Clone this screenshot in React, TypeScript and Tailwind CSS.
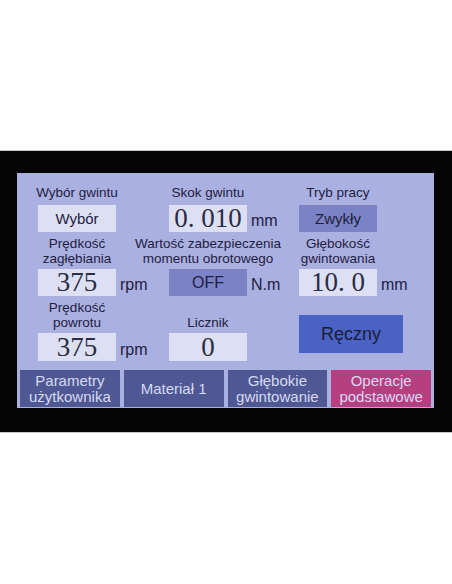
import React from "react";

const sans = { fontFamily: '"Liberation Sans", Arial, sans-serif' };

function Label({ lines }: { lines: string[] }) {
  return (
    <div className="w-[78px] flex flex-col items-center">
      {lines.map((l) => (
        <div key={l} className="whitespace-nowrap text-[13.5px] leading-[15px] text-[#1e2140]">
          {l}
        </div>
      ))}
    </div>
  );
}

function ValueBox({ value, dark, serif, unit, h = "h-[27px]" }: { value: string; dark?: boolean; serif?: boolean; unit?: string; h?: string }) {
  return (
    <div className="flex items-end gap-[4px]">
      <div
        className={`w-[78px] ${h} flex items-center justify-center ${dark ? "bg-[#7b82c6]" : "bg-[#dde0f2]"}`}
      >
        {serif ? (
          <span
            className="text-[27px] leading-none text-[#2a2d45] whitespace-pre"
            style={{ fontFamily: '"Liberation Serif", "Times New Roman", serif' }}
          >
            {value}
          </span>
        ) : (
          <span className={`leading-none text-[#1e2140] ${dark && value === "OFF" ? "text-[16px] font-medium" : "text-[15px]"}`}>
            {value}
          </span>
        )}
      </div>
      {unit && <span className="text-[16px] leading-none pb-[3px] text-[#1e2140]">{unit}</span>}
    </div>
  );
}

const tabs = [
  { lines: ["Parametry", "użytkownika"], bg: "bg-[#4f5893]" },
  { lines: ["Materiał 1"], bg: "bg-[#4f5893]" },
  { lines: ["Głębokie", "gwintowanie"], bg: "bg-[#4f5893]" },
  { lines: ["Operacje", "podstawowe"], bg: "bg-[#b63f80]" },
];

export default function App() {
  return (
    <div className="w-[452px] h-[584px] bg-white" style={sans}>
      <div className="h-[150px]" />
      <div className="h-[283px] bg-[#050505] border-y border-[#c8c8c8] pl-[17px] pt-[22px]">
        <div className="w-[417px] h-[235px] bg-[#aab0e0] flex flex-col">
          {/* Row 1 */}
          <div className="grid grid-cols-[131px_130px_130px] pl-[21px] pt-[12px]">
            <div className="flex flex-col">
              <Label lines={["Wybór gwintu"]} />
              <div className="mt-[5px]">
                <ValueBox value="Wybór" />
              </div>
            </div>
            <div className="flex flex-col">
              <Label lines={["Skok gwintu"]} />
              <div className="mt-[5px]">
                <ValueBox value="0. 010" serif unit="mm" />
              </div>
            </div>
            <div className="flex flex-col">
              <Label lines={["Tryb pracy"]} />
              <div className="mt-[5px]">
                <ValueBox value="Zwykły" dark />
              </div>
            </div>
          </div>

          {/* Row 2 */}
          <div className="grid grid-cols-[131px_130px_130px] pl-[21px] pt-[4px]">
            <div className="flex flex-col">
              <Label lines={["Prędkość", "zagłębiania"]} />
              <div className="mt-[3px]">
                <ValueBox value="375" serif unit="rpm" />
              </div>
            </div>
            <div className="flex flex-col">
              <Label lines={["Wartość zabezpieczenia", "momentu obrotowego"]} />
              <div className="mt-[3px]">
                <ValueBox value="OFF" dark unit="N.m" />
              </div>
            </div>
            <div className="flex flex-col">
              <Label lines={["Głębokość", "gwintowania"]} />
              <div className="mt-[3px]">
                <ValueBox value="10. 0" serif unit="mm" />
              </div>
            </div>
          </div>

          {/* Row 3 */}
          <div className="grid grid-cols-[131px_130px_130px] pl-[21px]">
            <div className="flex flex-col pt-[4px]">
              <Label lines={["Prędkość", "powrotu"]} />
              <div className="mt-[3px]">
                <ValueBox value="375" serif unit="rpm" h="h-[28px]" />
              </div>
            </div>
            <div className="flex flex-col pt-[19px]">
              <Label lines={["Licznik"]} />
              <div className="mt-[3px]">
                <ValueBox value="0" serif h="h-[28px]" />
              </div>
            </div>
            <div className="pt-[19px]">
              <button className="w-[104px] h-[38px] bg-[#4a62c4] text-[18px] text-[#1a1d3a] flex items-center justify-center">
                Ręczny
              </button>
            </div>
          </div>

          {/* Bottom tabs */}
          <div className="grid grid-cols-4 gap-[4px] px-[3px] mt-[9px]">
            {tabs.map((t) => (
              <div
                key={t.lines[0]}
                className={`${t.bg} h-[37px] flex flex-col items-center justify-center text-[15px] leading-[16px] text-[#d6daf4]`}
              >
                {t.lines.map((l) => (
                  <span key={l} className="whitespace-nowrap">
                    {l}
                  </span>
                ))}
              </div>
            ))}
          </div>
        </div>
      </div>
    </div>
  );
}
